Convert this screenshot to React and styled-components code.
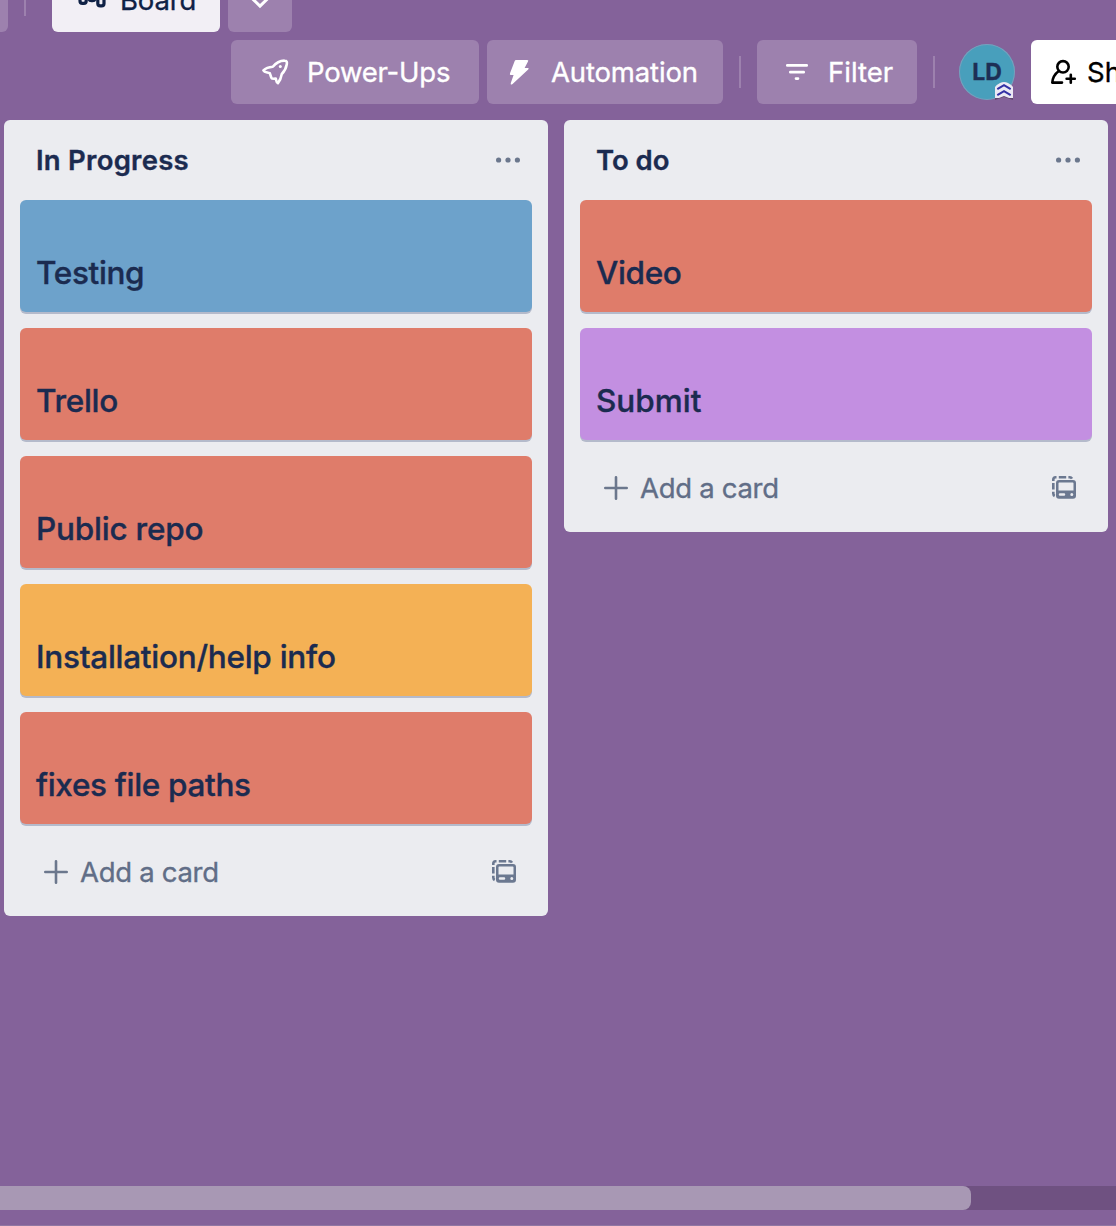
import React from "react";
import styled, { createGlobalStyle } from "styled-components";

const Global = createGlobalStyle`
  * { box-sizing: border-box; }
  html, body { margin: 0; padding: 0; overflow: hidden; }
  body { background: #84629a; font-family: Inter, "Liberation Sans", sans-serif; }
  button { font: inherit; border: 0; margin: 0; text-align: left; }
`;

const Page = styled.div`
  width: 1116px;
  height: 1226px;
  overflow: hidden;
  display: flex;
  flex-direction: column;
  background: #84629a;
  border-bottom: 1px solid #9077a3;
`;

const Label = styled.span`
  font-size: ${(p) => p.$size || 27.5}px;
  font-weight: ${(p) => p.$weight || 400};
  letter-spacing: ${(p) => p.$track || 0}px;
  line-height: 40px;
  white-space: nowrap;
  -webkit-text-stroke: 0.35px currentColor;
`;

const Views = styled.div`
  display: flex;
  flex: none;
  height: 64px;
  margin-top: -32px;
`;

const HeaderButton = styled.button`
  flex: none;
  display: flex;
  align-items: center;
  width: ${(p) => p.$width}px;
  height: 64px;
  padding: 0 0 0 ${(p) => p.$pad || 0}px;
  gap: ${(p) => p.$gap || 0}px;
  border-radius: 6px;
  background: ${(p) => p.$bg || "#9d81ae"};
  color: ${(p) => p.$color || "#fff"};
  svg { flex: none; display: block; }
`;

const PreviousView = styled(HeaderButton)`
  border-radius: 0 6px 6px 0;
`;

const Divider = styled.div`
  flex: none;
  align-self: center;
  width: 2px;
  height: 32px;
  margin: 0 ${(p) => p.$right}px 0 16px;
  background: #9d81ae;
`;

const BoardTab = styled(HeaderButton)`
  margin-right: 8px;
`;

const Tools = styled.div`
  display: flex;
  flex: none;
  align-items: center;
  height: 64px;
  margin-top: 8px;
  padding-left: 231px;
`;

const ToolGroup = styled.div`
  display: flex;
  gap: 8px;
`;

const Avatar = styled.div`
  flex: none;
  position: relative;
  display: flex;
  align-items: center;
  justify-content: center;
  width: 56px;
  height: 56px;
  margin-right: 16px;
  border-radius: 50%;
  background: #489fbc;
  box-shadow: inset 0 0 0 1px rgba(160, 160, 190, 0.55);
  color: #1d2f55;
`;

const Badge = styled.svg`
  position: absolute;
  right: 1px;
  bottom: 0;
`;

const Lists = styled.main`
  display: flex;
  flex: none;
  align-items: flex-start;
  gap: 16px;
  height: 1082px;
  padding: 16px 0 0 4px;
`;

const List = styled.section`
  flex: none;
  width: 544px;
  border-radius: 6px;
  background: #ebecf0;
`;

const ListHeader = styled.header`
  display: flex;
  align-items: center;
  justify-content: space-between;
  height: 80px;
  padding: 0 28px 0 32px;
  color: #1b2b50;
`;

const Cards = styled.div`
  display: flex;
  flex-direction: column;
  gap: 16px;
  padding: 0 16px;
`;

const Card = styled.article`
  display: flex;
  align-items: flex-end;
  height: 112px;
  padding: 0 16px 19px;
  border-radius: 6px;
  background: ${(p) => p.$color};
  box-shadow: 0 2px 0 #b4bacb;
  color: #1b2b50;
`;

const ListFooter = styled.footer`
  display: flex;
  align-items: center;
  height: 92px;
  padding: 4px 30px 0 40px;
  color: #616e87;
`;

const AddCard = styled.button`
  display: flex;
  align-items: center;
  flex: 1;
  gap: 12px;
  padding: 0;
  background: none;
  color: inherit;
`;

const ScrollTrack = styled.div`
  flex: none;
  height: 24px;
  background: #6f5181;
`;

const ScrollThumb = styled.div`
  width: 971px;
  height: 24px;
  border-radius: 0 8px 8px 0;
  background: #a898b4;
`;

const BoardIcon = () => (
  <svg width="28" height="28" viewBox="0 0 28 28" fill="none" stroke="#0f2145" strokeWidth="3.2">
    <rect x="2" y="1" width="6.2" height="16.4" rx="2.4" />
    <rect x="11" y="1" width="6" height="13.7" rx="2.4" />
    <rect x="19.8" y="1" width="6.2" height="18.8" rx="2.4" />
  </svg>
);

const ChevronIcon = () => (
  <svg width="20" height="20" viewBox="0 0 20 20" fill="none" stroke="#fff" strokeWidth="3" strokeLinecap="round">
    <path d="M2.5 8.8 10 16.1 17.5 8.8" />
  </svg>
);

const RocketIcon = () => (
  <svg width="28" height="28" viewBox="0 0 28 28" fill="none" stroke="#fff" strokeWidth="2.6" strokeLinejoin="round" strokeLinecap="round">
    <path d="M2.4 12.5C5 10 8.4 9.1 11.8 8.8C15 4.8 19.4 2.5 23.6 2.6C26 2.6 26.1 4.5 25.8 6.2C25 10.5 23.6 13.2 20.8 16C20.2 19.5 19 22.5 16.9 25.2C15.2 24.8 15.4 22.5 14.8 20.6C12.7 20.8 11 20.9 10.8 20.4C9.8 19.5 10 18 8.8 15.2C6.4 14.2 3.5 14.6 2.4 12.5Z" />
    <circle cx="19.3" cy="8.6" r="1.5" fill="#fff" stroke="none" />
  </svg>
);

const BoltIcon = () => (
  <svg width="22" height="28" viewBox="0 0 22 28" fill="#fff">
    <path d="M8 2H19.2Q21 2 20 3.6L16.6 10H20Q21.4 10.2 20.2 11.5L4.6 26Q2.2 27.6 2.8 25L5.6 17H2.6Q1.5 16.8 2 15.2L6.7 3Q7.1 2 8 2Z" />
  </svg>
);

const FilterIcon = () => (
  <svg width="24" height="20" viewBox="0 0 24 20" fill="none" stroke="#fff" strokeWidth="2.7" strokeLinecap="round">
    <path d="M2.3 3.4H21.7M5.3 10.2H18.7M11 16.6H13" />
  </svg>
);

const ShareIcon = () => (
  <svg width="28" height="28" viewBox="0 0 28 28" fill="none" stroke="#000" strokeWidth="2.6" strokeLinecap="round" strokeLinejoin="round">
    <circle cx="14" cy="8.8" r="5.7" />
    <path d="M9.8 13C6 15.8 3.7 18.8 3.3 24.6H13M17.6 20.8H25.8M21.8 16.8V24.8" />
  </svg>
);

const MenuIcon = () => (
  <svg width="24" height="6" viewBox="0 0 24 6" fill="#6b778d">
    <circle cx="2.6" cy="3" r="2.6" />
    <circle cx="12" cy="3" r="2.6" />
    <circle cx="21.4" cy="3" r="2.6" />
  </svg>
);

const PlusIcon = () => (
  <svg width="24" height="24" viewBox="0 0 24 24" fill="none" stroke="#6b778d" strokeWidth="2.6" strokeLinecap="round">
    <path d="M1.3 12H22.7M12 1.3V22.7" />
  </svg>
);

const TemplateIcon = () => (
  <svg width="28" height="28" viewBox="0 0 28 28" fill="none" stroke="#6b7890" strokeWidth="2.6">
    <path d="M3.3 6.9V5.5Q3.3 3.2 5.5 3.2H6.5M8.8 3.2H16.2M18.4 3.2H19.8Q21.2 3.2 22 4.6M3.3 9V15.4M3.3 17.8V19.6Q3.3 21.2 4.7 22" />
    <path fill="#6b7890" stroke="none" fillRule="evenodd" d="M9 6H23A3 3 0 0 1 26 9V21.7A3 3 0 0 1 23 24.7H9A3 3 0 0 1 6 21.7V9A3 3 0 0 1 9 6ZM8.5 9.2V16.4H23.5V9.2Q23.5 8.5 22.8 8.5H9.2Q8.5 8.5 8.5 9.2ZM10 19.2H14A1.2 1.2 0 0 1 14 21.7H10A1.2 1.2 0 0 1 10 19.2ZM21.8 19A1.5 1.5 0 1 0 21.8 22A1.5 1.5 0 0 0 21.8 19Z" />
  </svg>
);

const colors = { blue: "#6da2cb", red: "#df7c6a", yellow: "#f4b155", purple: "#c38fe1" };

const lists = [
  {
    title: "In Progress",
    track: 0.25,
    cards: [
      { title: "Testing", color: "blue", track: -0.35 },
      { title: "Trello", color: "red", track: -0.3 },
      { title: "Public repo", color: "red", track: -0.22 },
      { title: "Installation/help info", color: "yellow", track: -0.27 },
      { title: "fixes file paths", color: "red", track: -0.32 },
    ],
  },
  {
    title: "To do",
    track: -0.05,
    cards: [
      { title: "Video", color: "red", track: -0.35 },
      { title: "Submit", color: "purple", track: 0 },
    ],
  },
];

export default function App() {
  return (
    <Page>
      <Global />
      <Views>
        <PreviousView $width={8} />
        <Divider $right={26} />
        <BoardTab $width={168} $pad={26} $gap={14} $bg="#f2eff5" $color="#0f2145">
          <BoardIcon />
          <Label $track={-0.15}>Board</Label>
        </BoardTab>
        <HeaderButton $width={64} $pad={22}>
          <ChevronIcon />
        </HeaderButton>
      </Views>
      <Tools>
        <ToolGroup>
          <HeaderButton $width={248} $pad={30} $gap={18}>
            <RocketIcon />
            <Label $track={-0.22}>Power-Ups</Label>
          </HeaderButton>
          <HeaderButton $width={236} $pad={21} $gap={21}>
            <BoltIcon />
            <Label $track={-0.15}>Automation</Label>
          </HeaderButton>
        </ToolGroup>
        <Divider $right={16} />
        <HeaderButton $width={160} $pad={28} $gap={19}>
          <FilterIcon />
          <Label>Filter</Label>
        </HeaderButton>
        <Divider $right={24} />
        <Avatar>
          <Label $size={23} $weight={700}>LD</Label>
          <Badge width="20" height="19" viewBox="0 0 20 19">
            <path d="M1 18V8Q1 2 10 1Q19 2 19 8V18L10 15Z" fill="#62496f" transform="translate(0 1)" />
            <path d="M1 17V6Q2 4 6 2Q10 0 14 2Q18 4 19 6V17H15L10 15L5 17Z" fill="#ebe9f4" />
            <path d="M3.3 8.2 10 4.2 16.7 8.2M3.3 14.2 10 10.2 16.7 14.2" fill="none" stroke="#3331a5" strokeWidth="2" />
          </Badge>
        </Avatar>
        <HeaderButton $width={180} $pad={18} $gap={10} $bg="#fff" $color="#000">
          <ShareIcon />
          <Label>Share</Label>
        </HeaderButton>
      </Tools>
      <Lists>
        {lists.map((list) => (
          <List key={list.title}>
            <ListHeader>
              <Label $weight={600} $track={list.track}>{list.title}</Label>
              <MenuIcon />
            </ListHeader>
            <Cards>
              {list.cards.map((card) => (
                <Card key={card.title} $color={colors[card.color]}>
                  <Label $size={31.5} $weight={550} $track={card.track}>{card.title}</Label>
                </Card>
              ))}
            </Cards>
            <ListFooter>
              <AddCard>
                <PlusIcon />
                <Label $track={-0.3}>Add a card</Label>
              </AddCard>
              <TemplateIcon />
            </ListFooter>
          </List>
        ))}
      </Lists>
      <ScrollTrack>
        <ScrollThumb />
      </ScrollTrack>
    </Page>
  );
}
